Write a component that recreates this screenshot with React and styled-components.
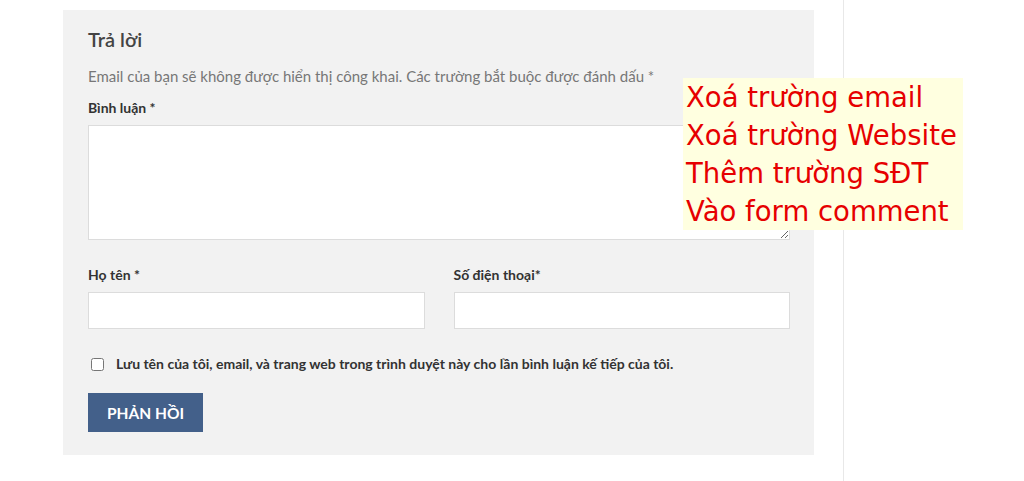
import React from 'react';
import styled, { createGlobalStyle } from 'styled-components';

const GlobalStyle = createGlobalStyle`
  html, body {
    margin: 0;
    padding: 0;
    background: #fff;
    font-family: Lato, "Noto Sans", sans-serif;
  }
`;

function App() {
  return (
    <Page>
      <GlobalStyle />
      <Main>
        <Respond>
          <Title>Trả lời</Title>
          <Notice>Email của bạn sẽ không được hiển thị công khai. Các trường bắt buộc được đánh dấu *</Notice>
          <Field>
            <Label>Bình luận *</Label>
            <TextArea />
          </Field>
          <Row>
            <Field>
              <Label>Họ tên *</Label>
              <Input />
            </Field>
            <Field>
              <Label>Số điện thoại*</Label>
              <Input />
            </Field>
          </Row>
          <Consent>
            <Check type="checkbox" />
            Lưu tên của tôi, email, và trang web trong trình duyệt này cho lần bình luận kế tiếp của tôi.
          </Consent>
          <Submit>Phản hồi</Submit>
        </Respond>
      </Main>
      <Sidebar />
      <Note>
        <div>Xoá trường email</div>
        <div>Xoá trường Website</div>
        <div>Thêm trường SĐT</div>
        <div>Vào form comment</div>
      </Note>
    </Page>
  );
}

const Page = styled.div`
  position: relative;
  display: flex;
  width: 1024px;
  height: 481px;
  overflow: hidden;
`;

const Main = styled.div`
  width: 751px;
  padding: 10px 29px 0 63px;
`;

const Sidebar = styled.div`
  border-left: 1px solid #e8e8e8;
  height: 100%;
`;

const Respond = styled.div`
  background: #f2f2f2;
  padding: 19px 24px 23px 25px;
`;

const Title = styled.h3`
  margin: 0 0 17px;
  font-size: 20px;
  font-weight: 600;
  color: #444;
  line-height: 20px;
`;

const Notice = styled.p`
  margin: 0 0 13px;
  font-size: 15px;
  color: #777;
  line-height: 20px;
`;

const Field = styled.div`
  display: flex;
  flex-direction: column;
  flex: 1;
`;

const Label = styled.label`
  font-size: 14px;
  font-weight: 700;
  color: #333;
  line-height: 18px;
  margin-bottom: 8px;
`;

const TextArea = styled.textarea`
  box-sizing: border-box;
  width: 100%;
  height: 115px;
  border: 1px solid #dcdcdc;
  background: #fff;
  margin: 0 0 26px;
  resize: vertical;
`;

const Row = styled.div`
  display: flex;
  gap: 29px;
`;

const Input = styled.input`
  box-sizing: border-box;
  width: 100%;
  height: 37px;
  border: 1px solid #dcdcdc;
  background: #fff;
`;

const Consent = styled.label`
  display: flex;
  align-items: center;
  gap: 12px;
  margin: 26px 0 20px 3px;
  font-size: 14px;
  font-weight: 700;
  color: #333;
  line-height: 18px;
`;

const Check = styled.input`
  margin: 0;
  width: 13px;
  height: 13px;
`;

const Submit = styled.button`
  width: 115px;
  height: 39px;
  border: none;
  background: #43608a;
  color: #fff;
  font-family: Lato, sans-serif;
  font-size: 15.5px;
  font-weight: 700;
  text-transform: uppercase;
`;

const Note = styled.div`
  position: absolute;
  left: 683px;
  top: 78px;
  width: 280px;
  padding: 0 0 0 3px;
  box-sizing: border-box;
  background: #ffffe0;
  color: #e60000;
  font-family: "DejaVu Sans", Verdana, sans-serif;
  font-size: 27.5px;
  line-height: 38px;
`;

export default App;
